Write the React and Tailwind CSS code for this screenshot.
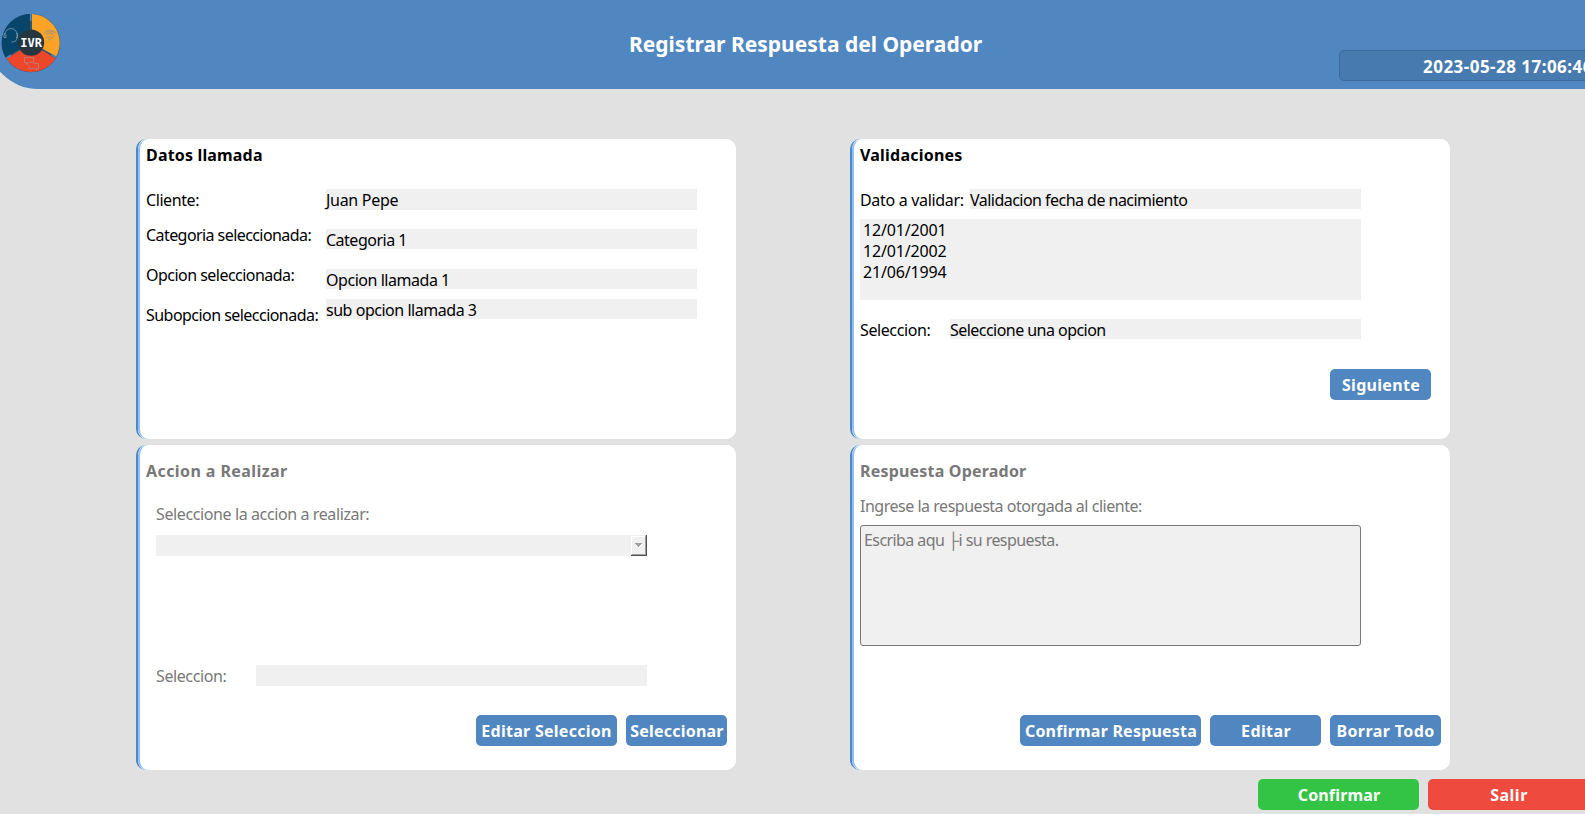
import React from "react";

function Card({ className, children }) {
  return (
    <section className={`flex w-[600px] rounded-[10px] border-l-2 border-[#4f87c3] bg-white ${className}`}>
      <div className="flex w-full flex-col rounded-l-[10px] rounded-r-[10px] border-l-2 border-[#90c0f9] bg-white pl-1.5 text-base leading-5">
        {children}
      </div>
    </section>
  );
}

function Button({ className, children }) {
  return (
    <button
      type="button"
      className={`flex h-[31px] shrink-0 items-center justify-center whitespace-nowrap rounded-[5px] pt-px text-base leading-5 font-bold text-white ${className}`}
    >
      {children}
    </button>
  );
}

function Field({ className, children }) {
  return <div className={`shrink-0 bg-[#f0f0f0] pt-px text-base leading-5 ${className}`}>{children}</div>;
}

function Logo() {
  return (
    <svg width="60" height="60" viewBox="1 13 60 60" className="block">
      <circle cx="31" cy="43.1" r="29.2" fill="#33536f" />
      <path d="M30 43 L30 14 A29 29 0 0 0 5.6 57.6 Z" fill="#07456b" />
      <path d="M32 43 L32 14 A29 29 0 0 1 56.4 56.4 Z" fill="#faa325" />
      <path d="M31 43.6 L6.5 58.4 A29 29 0 0 0 55.6 58.4 Z" fill="#ee462a" />
      <path d="M30.7 14v7M6.3 57.9l4.5-2.7M51.5 54.8l4.6 2.7" stroke="#5087c1" strokeWidth="1.6" />
      <circle cx="31" cy="42.6" r="13.2" fill="#263740" />
      <g fill="none" stroke="#7f9bad" strokeWidth="0.8">
        <path d="M5 35.500v-1a6 6 0 0 1 12 0v3q0 4-4.500 4.500h-1" />
        <path d="M5 33.500h-1v4h2v-3M16.500 33.500h1v4h-1.500" />
      </g>
      <g fill="none" stroke="#a8957a" strokeWidth="0.9">
        <path d="M43.500 33.500q6-6 13 0M45.500 35.500q4.500-4 9 0M47.500 37.500q2.500-2 5 0M46 31h8M46.500 33h7M47 36.500l2.500 4 4-4" />
      </g>
      <g fill="none" stroke="#b98378" strokeWidth="0.8">
        <path d="M24.500 57.500h9v5h-5l-2 2v-2h-2z" />
        <path d="M34 63.500h4.500v5h-2v2l-2-2h-5.500v-4" />
      </g>
      <text
        x="20.2"
        y="47.4"
        textLength="21.800"
        lengthAdjust="spacingAndGlyphs"
        className="fill-white font-['DejaVu_Sans_Mono',monospace] text-[13px] font-bold"
      >
        IVR
      </text>
    </svg>
  );
}

export default function App() {
  return (
    <div className="flex h-[814px] w-[1585px] flex-col overflow-hidden bg-[#e1e1e1] font-['Noto_Sans',sans-serif] text-black">
      <header className="-ml-3 flex h-[89px] shrink-0 rounded-bl-[50px] bg-[#5087c1] pl-[13px]">
        <div className="w-[628px] shrink-0 pt-[13px]">
          <Logo />
        </div>
        <h1 className="w-[710px] shrink-0 pt-[29px] text-[21px] leading-[30px] font-bold text-white">
          Registrar Respuesta del Operador
        </h1>
        <div className="mt-[50px] h-[31px] w-[260px] shrink-0 rounded-[5px] border border-[#3c6b9b] bg-[#477bb0] pt-1.5 pl-[83px] text-[17px] leading-5 font-bold tracking-[0.47px] whitespace-nowrap text-white">
          2023-05-28 17:06:46
        </div>
      </header>

      <main className="mt-[50px] ml-[136px] flex shrink-0 gap-[114px]">
        <div className="flex flex-col gap-1.5">
          <Card className="h-[300px]">
            <h2 className="pt-1.5 font-bold tracking-[0.17px]">Datos llamada</h2>
            <div className="flex pt-6">
              <div className="flex w-[180px] flex-col whitespace-nowrap">
                <span className="mt-px h-[35px] tracking-[-0.42px]">Cliente:</span>
                <span className="h-10 tracking-[-0.57px]">Categoria seleccionada:</span>
                <span className="h-10 tracking-[-0.53px]">Opcion seleccionada:</span>
                <span className="h-5 tracking-[-0.54px]">Subopcion seleccionada:</span>
              </div>
              <div className="flex w-[371px] flex-col">
                <Field className="h-[21px] tracking-[-0.3px]">Juan Pepe</Field>
                <Field className="mt-[19px] h-5 tracking-[-0.5px]">Categoria 1</Field>
                <Field className="mt-5 h-5 tracking-[-0.46px]">Opcion llamada 1</Field>
                <Field className="mt-2.5 h-5 tracking-[-0.47px]">sub opcion llamada 3</Field>
              </div>
            </div>
          </Card>

          <Card className="h-[325px] text-[#787878]">
            <h2 className="pt-4 font-bold tracking-[0.42px]">Accion a Realizar</h2>
            <div className="flex flex-col pt-[23px] pl-2.5">
              <span className="tracking-[-0.39px]">Seleccione la accion a realizar:</span>
              <div className="mt-[11px] flex h-[21px] w-[491px] justify-end bg-[#f0f0f0]">
                <div className="flex w-4 items-center justify-center border-r border-b border-[#505050]">
                  <div className="flex h-full w-full items-center justify-center border-t border-r border-b border-l border-t-[#f0f0f0] border-r-[#a0a0a0] border-b-[#a0a0a0] border-l-white shadow-[inset_0_1px_0_white]">
                    <svg width="8" height="5" viewBox="0 0 8 5">
                      <path d="M1 1h7l-3.500 4z" fill="white" />
                      <path d="M0 0h7v1h-1v1h-1v1h-1v1h-1v-1h-1v-1h-1v-1h-1z" fill="#a0a0a0" />
                    </svg>
                  </div>
                </div>
              </div>
              <div className="mt-[109px] flex">
                <span className="w-[100px] pt-px tracking-[-0.4px]">Seleccion:</span>
                <Field className="h-[21px] w-[391px]" />
              </div>
            </div>
            <div className="mt-[29px] flex justify-end gap-[9px] pr-[9px]">
              <Button className="w-[141px] bg-[#5087c1] tracking-[0.27px]">Editar Seleccion</Button>
              <Button className="w-[101px] bg-[#5087c1] pl-px tracking-[0.2px]">Seleccionar</Button>
            </div>
          </Card>
        </div>

        <div className="flex flex-col gap-1.5">
          <Card className="h-[300px]">
            <h2 className="pt-1.5 font-bold tracking-[0.22px]">Validaciones</h2>
            <div className="flex pt-6">
              <span className="w-[110px] pt-px tracking-[-0.32px] whitespace-nowrap">Dato a validar:</span>
              <Field className="h-5 w-[391px] tracking-[-0.53px]">Validacion fecha de nacimiento</Field>
            </div>
            <ul className="mt-[9px] h-[81px] w-[501px] bg-[#f0f0f0] pt-px pl-[3px] leading-[21px] tracking-[-0.15px]">
              <li>12/01/2001</li>
              <li>12/01/2002</li>
              <li>21/06/1994</li>
            </ul>
            <div className="flex pt-[19px]">
              <span className="w-[90px] pt-px tracking-[-0.4px]">Seleccion:</span>
              <Field className="h-5 w-[411px] tracking-[-0.54px]">Seleccione una opcion</Field>
            </div>
            <div className="mt-[29px] flex justify-end pr-[19px]">
              <Button className="w-[101px] bg-[#5087c1] pl-px tracking-[0.3px]">Siguiente</Button>
            </div>
          </Card>

          <Card className="h-[325px] text-[#787878]">
            <h2 className="pt-4 font-bold tracking-[0.2px]">Respuesta Operador</h2>
            <span className="mt-[15px] tracking-[-0.48px]">Ingrese la respuesta otorgada al cliente:</span>
            <div className="mt-[9px] h-[121px] w-[501px] shrink-0 rounded-[3px] border border-[#787878] bg-[#f0f0f0] pt-1 pl-[3px] tracking-[-0.58px]">
              Escriba aqu ├i su respuesta.
            </div>
            <div className="mt-[69px] flex justify-end gap-[9px] pr-[9px]">
              <Button className="w-[181px] bg-[#5087c1] pl-px tracking-[0.22px]">Confirmar Respuesta</Button>
              <Button className="w-[111px] bg-[#5087c1] pl-px tracking-[0.4px]">Editar</Button>
              <Button className="w-[111px] bg-[#5087c1] tracking-[0.4px]">Borrar Todo</Button>
            </div>
          </Card>
        </div>
      </main>

      <footer className="mt-[9px] ml-[1258px] flex shrink-0 gap-[9px]">
        <Button className="w-[161px] bg-[#33c445] pl-px tracking-[0.15px]">Confirmar</Button>
        <Button className="w-[161px] bg-[#ee4b3e] pl-px tracking-[0.5px]">Salir</Button>
      </footer>
    </div>
  );
}
